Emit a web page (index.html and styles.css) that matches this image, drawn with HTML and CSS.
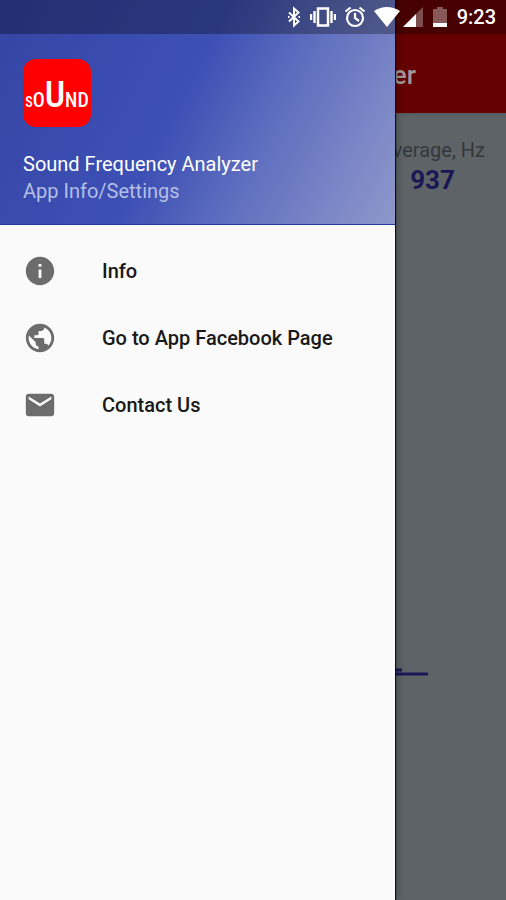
FILE: index.html
```html
<!DOCTYPE html>
<html lang="en">
<head>
<meta charset="utf-8">
<meta name="viewport" content="width=device-width, initial-scale=1">
<title>Sound Frequency Analyzer</title>
<link rel="stylesheet" href="styles.css">
</head>
<body>
<div class="app">
  <div class="screen">
    <header class="toolbar"><h1 class="toolbar-title">Sound Frequency Analyzer</h1></header>
    <main class="content">
      <section class="reading">
        <span class="reading-label">Average, Hz</span>
        <strong class="reading-value">937</strong>
      </section>
      <svg class="chart" viewBox="0 0 120 12" aria-hidden="true">
        <path d="M0 2h16M0 6h42" fill="none" stroke="#191854" stroke-width="3"/>
      </svg>
    </main>
  </div>

  <aside class="drawer">
    <header class="drawer-header">
      <div class="logo"><span class="s">S</span><span class="o">O</span><span class="u">U</span><span class="o">N</span><span class="o">D</span></div>
      <div class="drawer-title">Sound Frequency Analyzer</div>
      <div class="drawer-subtitle">App Info/Settings</div>
    </header>
    <nav class="menu">
      <a class="menu-item" href="#info">
        <svg class="menu-icon" viewBox="0 0 24 24" aria-hidden="true"><path d="M12 2C6.48 2 2 6.48 2 12s4.480 10 10 10 10-4.480 10-10S17.520 2 12 2zm1 15h-2v-6h2v6zm0-8h-2V7h2v2z"/></svg>
        <span>Info</span>
      </a>
      <a class="menu-item" href="#facebook">
        <svg class="menu-icon" viewBox="0 0 24 24" aria-hidden="true"><path d="M12 2C6.480 2 2 6.480 2 12s4.480 10 10 10 10-4.480 10-10S17.520 2 12 2zm-1 17.930c-3.950-.490-7-3.850-7-7.930 0-.620.080-1.210.210-1.790L9 15v1c0 1.100.9 2 2 2v1.930zm6.900-2.540c-.260-.810-1-1.390-1.900-1.390h-1v-3c0-.550-.450-1-1-1H8v-2h2c.550 0 1-.450 1-1V7h2c1.100 0 2-.9 2-2v-.410c2.930 1.190 5 4.060 5 7.410 0 2.080-.8 3.970-2.100 5.390z"/></svg>
        <span>Go to App Facebook Page</span>
      </a>
      <a class="menu-item" href="#contact">
        <svg class="menu-icon" viewBox="0 0 24 24" aria-hidden="true"><path d="M20 4H4c-1.100 0-1.990.9-1.990 2L2 18c0 1.100.9 2 2 2h16c1.100 0 2-.9 2-2V6c0-1.100-.9-2-2-2zm0 4l-8 5-8-5V6l8 5 8-5v2z"/></svg>
        <span>Contact Us</span>
      </a>
    </nav>
  </aside>

  <div class="status-bar">
    <svg width="16" height="22" viewBox="0 0 16 22" aria-hidden="true"><path d="M3 6.500l9.500 9L8 19.500v-17l4.500 4-9.500 9M2 11h1.500M12.500 11H14" fill="none" stroke="#fff" stroke-width="2"/></svg>
    <svg width="26" height="22" viewBox="0 0 26 22" aria-hidden="true"><path d="M8 2.500h10v17H8z" fill="none" stroke="#fff" stroke-width="2.500"/><path d="M1 8v6M4.500 5v12M21.500 5v12M25 8v6" stroke="#fff" stroke-width="2.400"/></svg>
    <svg width="22" height="22" viewBox="0 0 22 22" aria-hidden="true"><circle cx="11" cy="12" r="8" fill="none" stroke="#fff" stroke-width="2.200"/><path d="M11 7v5l4 3M1.500 5.500l5-4M20.500 5.500l-5-4" fill="none" stroke="#fff" stroke-width="2.200"/></svg>
    <svg class="wifi" width="26" height="22" viewBox="0 0 26 22" aria-hidden="true"><path d="M0 5Q13-3 26 5L13 21z" fill="#fff"/></svg>
    <svg width="22" height="22" viewBox="0 0 22 22" aria-hidden="true"><path d="M21 1v20H1z" fill="#fff" fill-opacity=".3"/><path d="M14 8v13H1z" fill="#fff"/></svg>
    <svg class="battery" width="14" height="22" viewBox="0 0 14 22" aria-hidden="true"><path d="M0 3h4V1h6v2h4v14H0z" fill="#fff" fill-opacity=".35"/><path d="M0 17h14v4H0z" fill="#fff"/></svg>
    <time class="clock">9:23</time>
  </div>
</div>
</body>
</html>
```
FILE: styles.css
```css
* { box-sizing: border-box; }

body {
  margin: 0;
  font-family: Roboto, "Liberation Sans", sans-serif;
}

.app {
  position: relative;
  min-height: 100vh;
  overflow: hidden;
  background: #5d6366;
}

.screen {
  display: flex;
  flex-direction: column;
  min-height: 100vh;
}

.toolbar {
  display: flex;
  align-items: center;
  justify-content: flex-end;
  height: 113px;
  padding: 37px 90px 0 0;
  background: #660000;
  box-shadow: 0 1px 3px #50565a;
}

.toolbar-title {
  margin: 0;
  color: #a09a9a;
  font-size: 26px;
  font-weight: 500;
  white-space: nowrap;
}

.content {
  display: flex;
  flex: 1;
  flex-direction: column;
  align-items: flex-end;
}

.reading {
  display: flex;
  flex-direction: column;
  align-items: center;
  padding: 24px 21px 0 0;
}

.reading-label {
  color: #34383a;
  font-size: 20px;
  line-height: 26px;
}

.reading-value {
  color: #191854;
  font-size: 26px;
  font-weight: 700;
  line-height: 34px;
}

.chart {
  width: 120px;
  height: 12px;
  margin: auto 0 220px;
}

.drawer {
  position: absolute;
  top: 0;
  bottom: 0;
  left: 0;
  width: 78%;
  background: #fafafa;
  box-shadow: 1px 0 1px #08101a, 3px 0 8px rgba(0, 0, 0, 0.2);
}

.drawer-header {
  padding: 59px 23px 19px;
  border-bottom: 1px solid #2438a0;
  background: linear-gradient(117deg, #3545a5 0%, #3d50b4 46%, #6271c0 68%, #8f98cb 100%);
}

.logo {
  display: flex;
  align-items: baseline;
  justify-content: center;
  width: 68px;
  height: 68px;
  margin-bottom: 24px;
  border-radius: 13px;
  background: #ff0000;
  color: #fff;
  font-family: "Roboto Condensed", "Liberation Sans Narrow", "Open Sans Condensed", Roboto, sans-serif;
  font-weight: 500;
  line-height: 72px;
}

.logo .s { font-size: 14px; }
.logo .o { font-size: 20px; }
.logo .u { font-size: 36px; }

.drawer-title,
.drawer-subtitle {
  font-size: 20px;
  line-height: 27px;
}

.drawer-title { color: #fff; }
.drawer-subtitle { color: #b5bfe6; }

.menu {
  display: flex;
  flex-direction: column;
  padding-top: 12px;
}

.menu-item {
  display: flex;
  align-items: center;
  gap: 45px;
  height: 67px;
  padding: 0 23px;
  color: #191919;
  font-size: 20px;
  font-weight: 500;
  text-decoration: none;
}

.menu-icon {
  width: 34px;
  height: 34px;
  fill: #6c6c6c;
}

.status-bar {
  position: absolute;
  top: 0;
  left: 0;
  right: 0;
  display: flex;
  align-items: center;
  justify-content: flex-end;
  gap: 8px;
  height: 34px;
  padding-right: 10px;
  background: rgba(0, 0, 0, 0.3);
}

.wifi { margin-right: -6px; }
.battery { margin: 0 2px 0 1px; }

.clock {
  color: #fff;
  font-size: 20px;
  font-weight: 500;
}
```
